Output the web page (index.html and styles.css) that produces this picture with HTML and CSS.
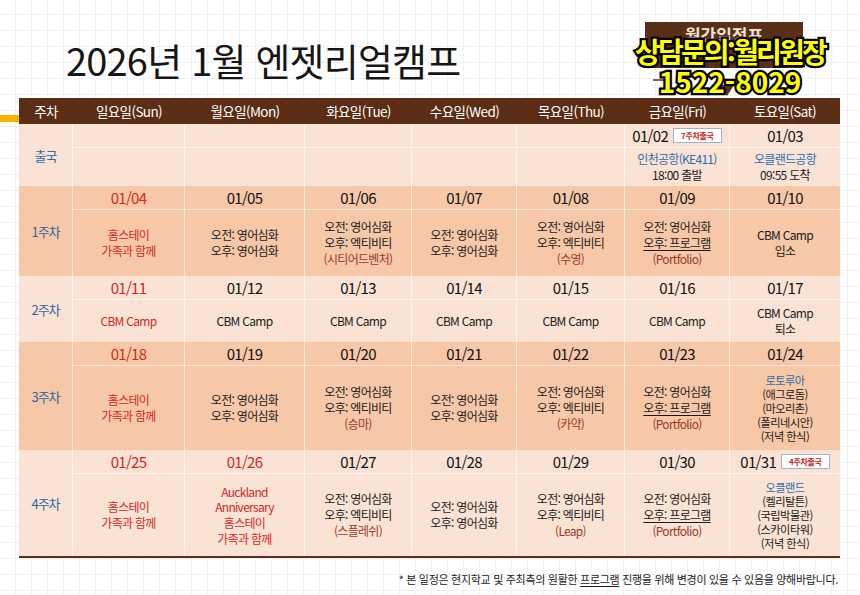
FILE: index.html
```html
<!DOCTYPE html>
<html lang="ko">
<head>
<meta charset="utf-8">
<title>2026년 1월 엔젯리얼캠프</title>
<link rel="stylesheet" href="styles.css">
</head>
<body>
<div class="page">
  <header class="top">
    <h1 class="title">2026년 1월 엔젯리얼캠프</h1>
  </header>

  <div class="banner">
    <svg width="164" height="80" viewBox="0 0 164 80">
      <rect x="0" y="2" width="158" height="46" fill="#5a2f17"/>
      <text x="79" y="22" text-anchor="middle" font-size="17" font-weight="700" fill="#f1e3d3" font-family="Noto Sans CJK KR, sans-serif">월간일정표</text>
      <line x1="8" y1="60" x2="24" y2="60" stroke="#5a2f17" stroke-width="1.5"/>
      <line x1="134" y1="60" x2="152" y2="60" stroke="#5a2f17" stroke-width="1.5"/>
      <polygon points="73,65 89,65 82,76" fill="#5a2f17"/>
    </svg>
  </div>

  <div class="contact">
    <div class="contact-line">상담문의:월리원장</div>
    <div class="contact-line">1522-8029</div>
  </div>

  <div class="board">
    <div class="side"><span class="side-bar"></span></div>
    <div class="table">
      <div class="thead">
        <div>주차</div><div>일요일(Sun)</div><div>월요일(Mon)</div><div>화요일(Tue)</div><div>수요일(Wed)</div><div>목요일(Thu)</div><div>금요일(Fri)</div><div>토요일(Sat)</div>
      </div>

      <!-- 출국 -->
      <div class="week light h-dep">
        <div class="wk">출국</div>
        <div class="date"></div><div class="date"></div><div class="date"></div><div class="date"></div><div class="date"></div>
        <div class="date"><span>01/02</span><span class="badge">7주차출국</span></div>
        <div class="date">01/03</div>
        <div class="cell"></div><div class="cell"></div><div class="cell"></div><div class="cell"></div><div class="cell"></div>
        <div class="cell dep"><span class="blue">인천공항(KE411)</span><span>18:00 출발</span></div>
        <div class="cell dep"><span class="blue">오클랜드공항</span><span>09:55 도착</span></div>
      </div>

      <!-- 1주차 -->
      <div class="week dark h-w1">
        <div class="wk">1주차</div>
        <div class="date red">01/04</div><div class="date">01/05</div><div class="date">01/06</div><div class="date">01/07</div><div class="date">01/08</div><div class="date">01/09</div><div class="date">01/10</div>
        <div class="cell red"><span>홈스테이</span><span>가족과 함께</span></div>
        <div class="cell"><span>오전: 영어심화</span><span>오후: 영어심화</span></div>
        <div class="cell"><span>오전: 영어심화</span><span>오후: 엑티비티</span><span class="par">(시티어드벤처)</span></div>
        <div class="cell"><span>오전: 영어심화</span><span>오후: 영어심화</span></div>
        <div class="cell"><span>오전: 영어심화</span><span>오후: 엑티비티</span><span class="par">(수영)</span></div>
        <div class="cell"><span>오전: 영어심화</span><span class="ul">오후: 프로그램</span><span class="par">(Portfolio)</span></div>
        <div class="cell"><span>CBM Camp</span><span>입소</span></div>
      </div>

      <!-- 2주차 -->
      <div class="week light h-w2">
        <div class="wk">2주차</div>
        <div class="date red">01/11</div><div class="date">01/12</div><div class="date">01/13</div><div class="date">01/14</div><div class="date">01/15</div><div class="date">01/16</div><div class="date">01/17</div>
        <div class="cell red"><span>CBM Camp</span></div>
        <div class="cell"><span>CBM Camp</span></div>
        <div class="cell"><span>CBM Camp</span></div>
        <div class="cell"><span>CBM Camp</span></div>
        <div class="cell"><span>CBM Camp</span></div>
        <div class="cell"><span>CBM Camp</span></div>
        <div class="cell"><span>CBM Camp</span><span>퇴소</span></div>
      </div>

      <!-- 3주차 -->
      <div class="week dark h-w3">
        <div class="wk">3주차</div>
        <div class="date red">01/18</div><div class="date">01/19</div><div class="date">01/20</div><div class="date">01/21</div><div class="date">01/22</div><div class="date">01/23</div><div class="date">01/24</div>
        <div class="cell red"><span>홈스테이</span><span>가족과 함께</span></div>
        <div class="cell"><span>오전: 영어심화</span><span>오후: 영어심화</span></div>
        <div class="cell"><span>오전: 영어심화</span><span>오후: 엑티비티</span><span class="par">(승마)</span></div>
        <div class="cell"><span>오전: 영어심화</span><span>오후: 영어심화</span></div>
        <div class="cell"><span>오전: 영어심화</span><span>오후: 엑티비티</span><span class="par">(카약)</span></div>
        <div class="cell"><span>오전: 영어심화</span><span class="ul">오후: 프로그램</span><span class="par">(Portfolio)</span></div>
        <div class="cell list"><span class="blue">로토루아</span><span>(애그로돔)</span><span>(마오리촌)</span><span>(폴리네시안)</span><span>(저녁 한식)</span></div>
      </div>

      <!-- 4주차 -->
      <div class="week light h-w4">
        <div class="wk">4주차</div>
        <div class="date red">01/25</div><div class="date red">01/26</div><div class="date">01/27</div><div class="date">01/28</div><div class="date">01/29</div><div class="date">01/30</div>
        <div class="date"><span>01/31</span><span class="badge">4주차출국</span></div>
        <div class="cell red"><span>홈스테이</span><span>가족과 함께</span></div>
        <div class="cell red"><span>Auckland</span><span>Anniversary</span><span>홈스테이</span><span>가족과 함께</span></div>
        <div class="cell"><span>오전: 영어심화</span><span>오후: 엑티비티</span><span class="par">(스플레쉬)</span></div>
        <div class="cell"><span>오전: 영어심화</span><span>오후: 영어심화</span></div>
        <div class="cell"><span>오전: 영어심화</span><span>오후: 엑티비티</span><span class="par">(Leap)</span></div>
        <div class="cell"><span>오전: 영어심화</span><span class="ul">오후: 프로그램</span><span class="par">(Portfolio)</span></div>
        <div class="cell list"><span class="blue">오클랜드</span><span>(켈리탈튼)</span><span>(국립박물관)</span><span>(스카이타워)</span><span>(저녁 한식)</span></div>
      </div>
    </div>
  </div>

  <p class="note">* 본 일정은 현지학교 및 주최측의 원활한 <span class="ul">프로그램</span> 진행을 위해 변경이 있을 수 있음을 양해바랍니다.</p>
</div>
</body>
</html>
```

FILE: styles.css
```css
* { box-sizing: border-box; }

html, body {
  margin: 0;
  padding: 0;
}

body {
  width: 860px;
  height: 595px;
  overflow: hidden;
  font-family: "Noto Sans CJK KR", "Noto Sans", sans-serif;
  color: #1a1a1a;
  background-color: #ffffff;
  background-image:
    linear-gradient(#f1f1f1 1px, transparent 1px),
    linear-gradient(90deg, #f1f1f1 1px, transparent 1px);
  background-size: 16px 16px;
  background-position: -1px -2px;
}

.page {
  position: relative;
  width: 860px;
  height: 595px;
}

.top {
  height: 98px;
}

.title {
  margin: 0;
  padding: 37px 0 0 66px;
  font-size: 38px;
  line-height: 46px;
  font-weight: 400;
  letter-spacing: -0.8px;
  color: #161616;
}

.banner {
  position: absolute;
  left: 645px;
  top: 20px;
  width: 164px;
  height: 80px;
}

.banner svg { display: block; }

.contact {
  position: absolute;
  left: 620px;
  top: 36px;
  width: 220px;
  text-align: center;
  font-weight: 700;
  font-size: 28px;
  line-height: 30px;
  color: #ffff00;
  -webkit-text-stroke: 4.5px #000;
  paint-order: stroke fill;
}

.contact-line:first-child {
  letter-spacing: -2.8px;
}

.contact-line:last-child {
  letter-spacing: 0;
}

.board {
  display: flex;
}

.side {
  width: 19px;
  display: flex;
  flex-direction: column;
}

.side-bar {
  display: block;
  margin-top: 17px;
  height: 7px;
  background: #f3b300;
}

.table {
  width: 821px;
  border-bottom: 2px solid #5a2f17;
}

.thead,
.week {
  display: grid;
  grid-template-columns: 54px 112px 120px 107px 105px 108px 105px 110px;
}

.thead {
  height: 26px;
  background: #5a2d14;
  color: #fff;
  font-size: 13.5px;
  letter-spacing: -0.6px;
}

.thead > div {
  display: flex;
  align-items: center;
  justify-content: center;
}

.week {
  grid-template-rows: 24px 1fr;
}

.light { background: #fae3d5; }
.dark { background: #f6c8a8; }

.h-dep { height: 62px; }
.h-w1 { height: 90px; }
.h-w2 { height: 66px; }
.h-w3 { height: 108px; }
.h-w4 { height: 106px; }

.wk {
  grid-row: 1 / 3;
  display: flex;
  align-items: center;
  justify-content: center;
  color: #2c67a1;
  font-size: 13px;
  letter-spacing: -1px;
  border-right: 1px solid rgba(255, 255, 255, 0.6);
}

.date {
  display: flex;
  align-items: center;
  justify-content: center;
  gap: 5px;
  font-size: 15px;
  letter-spacing: -0.7px;
  color: #111;
  border-right: 1px solid rgba(255, 255, 255, 0.6);
  border-bottom: 1px solid rgba(255, 255, 255, 0.55);
}

.cell {
  display: flex;
  flex-direction: column;
  align-items: center;
  justify-content: center;
  text-align: center;
  font-size: 12px;
  line-height: 15.7px;
  letter-spacing: -0.7px;
  color: #1a1a1a;
  border-right: 1px solid rgba(255, 255, 255, 0.6);
}

.week > :last-child,
.week > .date:nth-child(8) {
  border-right: none;
}

.cell.list {
  line-height: 14px;
  font-size: 11.2px;
  letter-spacing: -0.5px;
}

.cell.dep {
  line-height: 16px;
  font-size: 12px;
}

.badge {
  display: inline-block;
  height: 15px;
  line-height: 13px;
  padding: 0 7px;
  background: #fff;
  border: 1px solid #9fb3c9;
  color: #d0241b;
  font-size: 8px;
  font-weight: 700;
  letter-spacing: -0.3px;
}

.date.red,
.cell.red,
.red { color: #d3281d; }

.blue { color: #2a6cae; }

.par { color: #9a3a26; }

.ul {
  text-decoration: underline;
  text-underline-offset: 2px;
}

.note {
  margin: 13px 22px 0 0;
  text-align: right;
  font-size: 11px;
  letter-spacing: -0.3px;
  color: #222;
}
```
